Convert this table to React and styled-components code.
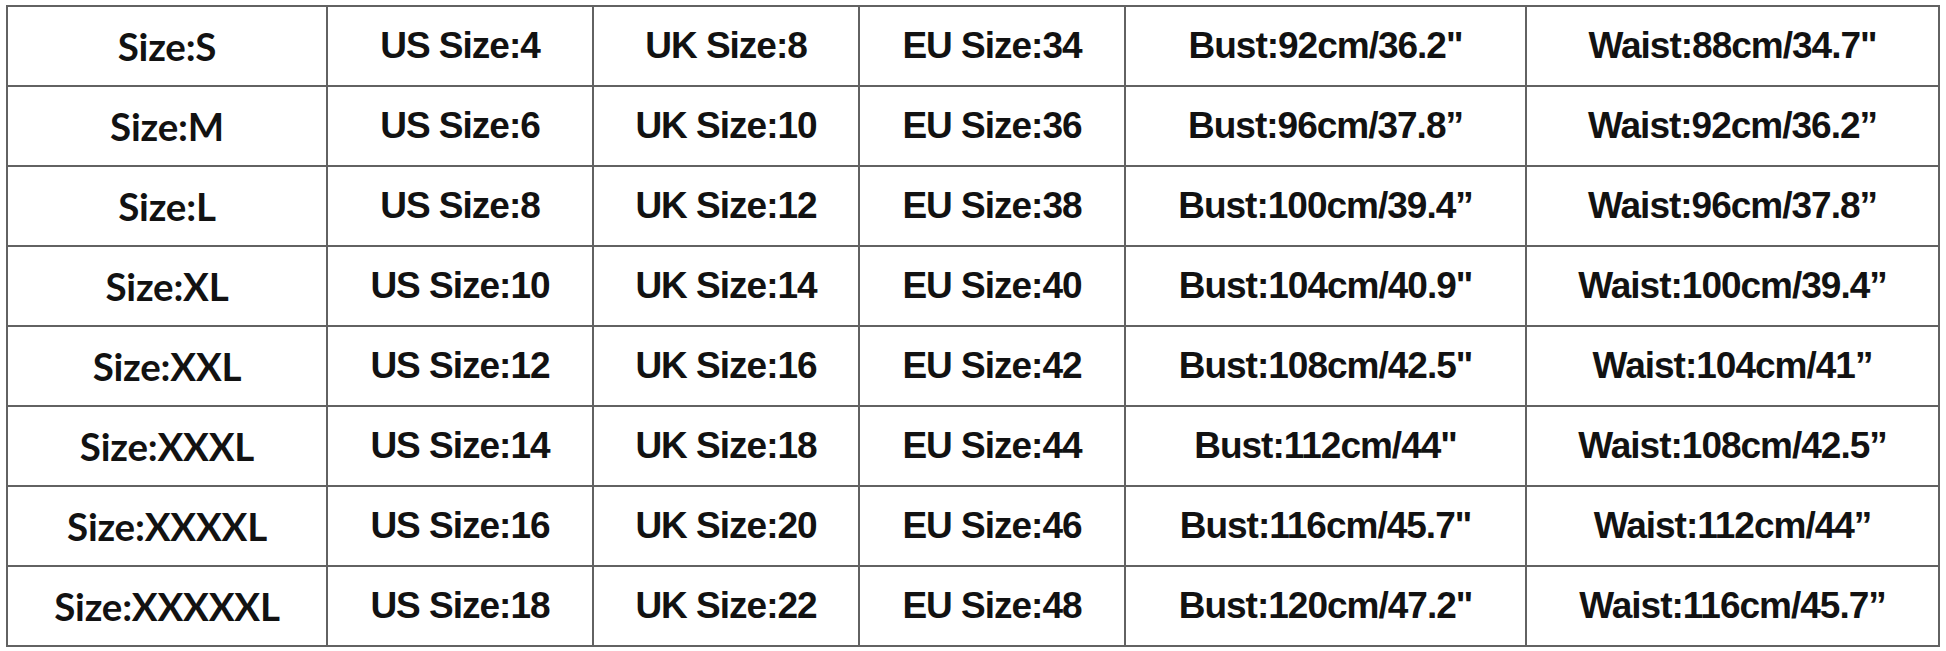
import React from "react";
import styled, { createGlobalStyle } from "styled-components";

const rows = [
  ["Size:S", "US Size:4", "UK Size:8", "EU Size:34", "Bust:92cm/36.2\"", "Waist:88cm/34.7\""],
  ["Size:M", "US Size:6", "UK Size:10", "EU Size:36", "Bust:96cm/37.8”", "Waist:92cm/36.2”"],
  ["Size:L", "US Size:8", "UK Size:12", "EU Size:38", "Bust:100cm/39.4”", "Waist:96cm/37.8”"],
  ["Size:XL", "US Size:10", "UK Size:14", "EU Size:40", "Bust:104cm/40.9\"", "Waist:100cm/39.4”"],
  ["Size:XXL", "US Size:12", "UK Size:16", "EU Size:42", "Bust:108cm/42.5\"", "Waist:104cm/41”"],
  ["Size:XXXL", "US Size:14", "UK Size:18", "EU Size:44", "Bust:112cm/44\"", "Waist:108cm/42.5”"],
  ["Size:XXXXL", "US Size:16", "UK Size:20", "EU Size:46", "Bust:116cm/45.7\"", "Waist:112cm/44”"],
  ["Size:XXXXXL", "US Size:18", "UK Size:22", "EU Size:48", "Bust:120cm/47.2\"", "Waist:116cm/45.7”"],
];

const GlobalStyle = createGlobalStyle`
  body {
    margin: 0;
    background: #ffffff;
  }
`;

const Page = styled.div`
  padding: 5px 0 0 6px;
`;

const Chart = styled.div`
  display: inline-grid;
  grid-template-columns: 318px 264px 264px 264px 399px 411px;
  grid-auto-rows: 78px;
  gap: 2px;
  padding: 2px;
  background: #626262;
`;

const Cell = styled.div`
  display: flex;
  align-items: center;
  justify-content: center;
  background: #ffffff;
  color: #121212;
  font-family: ${(p) => (p.$first ? 'Lato, "Open Sans", sans-serif' : '"Liberation Sans", Arial, sans-serif')};
  font-weight: 700;
  font-size: ${(p) => (p.$first ? "38.5px" : "37px")};
  letter-spacing: ${(p) => (p.$first ? "-0.2px" : "-1px")};
  white-space: nowrap;
`;

const App = () => {
  return (
    <Page>
      <GlobalStyle />
      <Chart>
        {rows.map((row, i) =>
          row.map((text, j) => (
            <Cell key={`${i}-${j}`} $first={j === 0}>
              {text}
            </Cell>
          ))
        )}
      </Chart>
    </Page>
  );
};

export default App;
